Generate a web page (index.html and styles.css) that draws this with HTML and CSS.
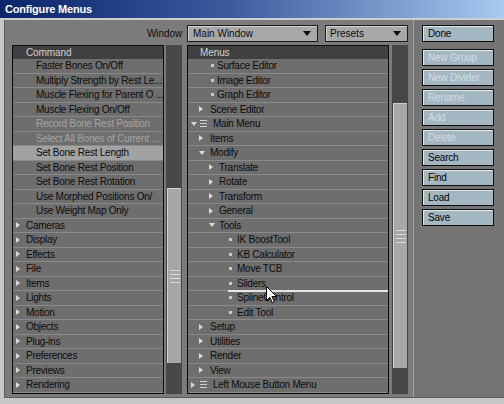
FILE: index.html
```html
<!DOCTYPE html>
<html>
<head>
<meta charset="utf-8">
<link rel="stylesheet" href="styles.css">
</head>
<body>
<div class="win">
  <div class="titlebar">Configure Menus</div>
  <div class="body">
    <div class="main">
      <div class="toprow">
        <div class="lblcell">Window</div>
        <div class="ddcell">
          <div class="dd dd-main"><span>Main Window</span><i class="arrow"></i></div>
          <div class="dd dd-presets"><span>Presets</span><i class="arrow"></i></div>
        </div>
      </div>
      <div class="lists">
        <div class="listbox lb-cmd">
          <div class="lhead">Command</div>
          <div class="row cmd">Faster Bones On/Off</div>
          <div class="row cmd">Multiply Strength by Rest Le...</div>
          <div class="row cmd">Muscle Flexing for Parent O ...</div>
          <div class="row cmd">Muscle Flexing On/Off</div>
          <div class="row cmd dis">Record Bone Rest Position</div>
          <div class="row cmd dis">Select All Bones of Current ...</div>
          <div class="row cmd sel">Set Bone Rest Length</div>
          <div class="row cmd">Set Bone Rest Position</div>
          <div class="row cmd">Set Bone Rest Rotation</div>
          <div class="row cmd">Use Morphed Positions On/</div>
          <div class="row cmd">Use Weight Map Only</div>
          <div class="row grp"><i class="tr"></i><span>Cameras</span></div>
          <div class="row grp"><i class="tr"></i><span>Display</span></div>
          <div class="row grp"><i class="tr"></i><span>Effects</span></div>
          <div class="row grp"><i class="tr"></i><span>File</span></div>
          <div class="row grp"><i class="tr"></i><span>Items</span></div>
          <div class="row grp"><i class="tr"></i><span>Lights</span></div>
          <div class="row grp"><i class="tr"></i><span>Motion</span></div>
          <div class="row grp"><i class="tr"></i><span>Objects</span></div>
          <div class="row grp"><i class="tr"></i><span>Plug-ins</span></div>
          <div class="row grp"><i class="tr"></i><span>Preferences</span></div>
          <div class="row grp"><i class="tr"></i><span>Previews</span></div>
          <div class="row grp"><i class="tr"></i><span>Rendering</span></div>
        </div>
        <div class="sbar sb-cmd"><div class="thumb"><div class="grip"></div></div></div>
        <div class="listbox lb-menu">
          <div class="lhead">Menus</div>
          <div class="row m-b2"><i class="bul"></i><span>Surface Editor</span></div>
          <div class="row m-b2"><i class="bul"></i><span>Image Editor</span></div>
          <div class="row m-b2"><i class="bul"></i><span>Graph Editor</span></div>
          <div class="row m-t1"><i class="tr"></i><span>Scene Editor</span></div>
          <div class="row m-t0"><i class="td"></i><i class="micon"></i><span>Main Menu</span></div>
          <div class="row m-t1"><i class="tr"></i><span>Items</span></div>
          <div class="row m-t1"><i class="td"></i><span>Modify</span></div>
          <div class="row m-t2"><i class="tr"></i><span>Translate</span></div>
          <div class="row m-t2"><i class="tr"></i><span>Rotate</span></div>
          <div class="row m-t2"><i class="tr"></i><span>Transform</span></div>
          <div class="row m-t2"><i class="tr"></i><span>General</span></div>
          <div class="row m-t2"><i class="td"></i><span>Tools</span></div>
          <div class="row m-b3"><i class="bul"></i><span>IK BoostTool</span></div>
          <div class="row m-b3"><i class="bul"></i><span>KB Calculator</span></div>
          <div class="row m-b3"><i class="bul"></i><span>Move TCB</span></div>
          <div class="row m-b3"><i class="bul"></i><span>Sliders</span></div>
          <div class="row m-b3"><i class="bul"></i><span>SplineControl</span></div>
          <div class="row m-b3"><i class="bul"></i><span>Edit Tool</span></div>
          <div class="row m-t1"><i class="tr"></i><span>Setup</span></div>
          <div class="row m-t1"><i class="tr"></i><span>Utilities</span></div>
          <div class="row m-t1"><i class="tr"></i><span>Render</span></div>
          <div class="row m-t1"><i class="tr"></i><span>View</span></div>
          <div class="row m-t0"><i class="tr"></i><i class="micon"></i><span>Left Mouse Button Menu</span></div>
          <div class="dropline"></div>
        </div>
        <div class="sbar sb-menu"><div class="thumb"><div class="grip"></div></div></div>
      </div>
    </div>
    <div class="side">
      <div class="btn done">Done</div>
      <div class="btn off">New Group</div>
      <div class="btn off">New Divider</div>
      <div class="btn off">Rename</div>
      <div class="btn off">Add</div>
      <div class="btn off">Delete</div>
      <div class="btn">Search</div>
      <div class="btn">Find</div>
      <div class="btn">Load</div>
      <div class="btn">Save</div>
    </div>
  </div>
  <svg class="cursor" width="12" height="18" viewBox="0 0 12 18">
    <path d="M0.5 0.5 L0.5 14.5 L3.8 11.3 L6.3 16.8 L8.4 15.9 L5.9 10.5 L10.5 10.5 Z" fill="#ffffff" stroke="#000000" stroke-width="1"/>
  </svg>
</div>
</body>
</html>
```

FILE: styles.css
```css
html, body {
  margin: 0;
  padding: 0;
  background: #7b7b7b;
  font-family: "Liberation Sans", Arial, sans-serif;
}

.win {
  width: 504px;
  height: 404px;
  position: relative;
  overflow: hidden;
  background: #c6c6c6;
  display: flex;
  flex-direction: column;
}

.titlebar {
  flex: none;
  height: 18px;
  line-height: 18px;
  padding-left: 5px;
  background: linear-gradient(90deg, #0a246a 0%, #3a5a9c 45%, #a6caf0 100%);
  color: #ffffff;
  font-weight: bold;
  font-size: 11px;
  letter-spacing: -0.2px;
  border-bottom: 2px solid #cfcfcf;
}

.body {
  flex: none;
  display: flex;
  margin-left: 4px;
  height: 378px;
  box-sizing: border-box;
  border-left: 1px solid #5a5a5a;
  border-bottom: 1px solid #5a5a5a;
  background: #7b7b7b;
}

.main {
  width: 408px;
  flex: none;
  box-sizing: border-box;
  padding-left: 7px;
}

.toprow {
  height: 25px;
  box-sizing: border-box;
  padding-top: 5px;
  display: flex;
  align-items: flex-start;
}

.lblcell {
  width: 170px;
  height: 17px;
  line-height: 17px;
  text-align: right;
  font-size: 10px;
  color: #0c0c0c;
  letter-spacing: -0.1px;
}

.ddcell {
  display: flex;
  margin-left: 5px;
}

.dd {
  height: 17px;
  box-sizing: border-box;
  border: 1px solid #1a1a1a;
  background: #a8a8a8;
  box-shadow: inset 1px 1px 0 #d2d2d2;
  display: flex;
  align-items: center;
  justify-content: space-between;
  padding: 0 6px 0 5px;
  font-size: 10px;
  color: #0c0c0c;
}

.dd-main {
  width: 131px;
  margin-right: 7px;
}

.dd-presets {
  width: 83px;
  padding-left: 4px;
}

.arrow {
  width: 0;
  height: 0;
  border-top: 5px solid #0c0c0c;
  border-left: 4px solid transparent;
  border-right: 4px solid transparent;
}

.lists {
  display: flex;
  height: 349px;
}

.listbox {
  position: relative;
  height: 349px;
  box-sizing: border-box;
  border: 1px solid #0c0c0c;
  background: #6e6e6e;
  overflow: hidden;
}

.lb-cmd { width: 152px; }
.lb-menu { width: 202px; margin-left: 5px; }

.lhead {
  height: 13px;
  line-height: 13px;
  background: #404040;
  color: #d0d0d0;
  font-size: 10px;
  padding-left: 13px;
  letter-spacing: -0.1px;
}

.lb-menu .lhead { padding-left: 12px; }

.row {
  height: 14.5px;
  box-sizing: border-box;
  border-bottom: 1px solid #8a8a8a;
  background: #6e6e6e;
  display: flex;
  align-items: center;
  font-size: 10px;
  letter-spacing: -0.25px;
  white-space: nowrap;
  overflow: hidden;
  color: #0c0c0c;
}

.row i { flex: none; }

.cmd { padding-left: 23px; }
.dis { color: #a4a4a4; }
.sel { background: #a2a2a2; }

.grp { padding-left: 3px; }
.grp .tr { margin-right: 6px; }

.tr {
  width: 0;
  height: 0;
  border-left: 4px solid #dadada;
  border-top: 3px solid transparent;
  border-bottom: 3px solid transparent;
}

.td {
  width: 0;
  height: 0;
  border-top: 4px solid #dadada;
  border-left: 3px solid transparent;
  border-right: 3px solid transparent;
}

.bul {
  width: 3px;
  height: 3px;
  background: #c8c8c8;
}

.micon {
  width: 7px;
  height: 7px;
  background: repeating-linear-gradient(#d0d0d0 0 1px, transparent 1px 3px);
}

.m-b2 { padding-left: 23px; }
.m-b2 .bul { margin-right: 3px; }

.m-t1 { padding-left: 11px; }
.m-t1 .tr { margin-right: 7px; }
.m-t1 .td { margin-right: 5px; }

.m-t2 { padding-left: 21px; }
.m-t2 .tr { margin-right: 6px; }
.m-t2 .td { margin-right: 4px; }

.m-b3 { padding-left: 41px; }
.m-b3 .bul { margin-right: 5px; }

.m-t0 { padding-left: 3px; }
.m-t0 .td { margin-right: 3px; }
.m-t0 .tr { margin-right: 5px; }
.m-t0 .micon { margin-right: 6px; }

.dropline {
  position: absolute;
  left: 40px;
  top: 244px;
  width: 162px;
  height: 2px;
  background: #e6e6e6;
}

.sbar {
  width: 16px;
  height: 349px;
  box-sizing: border-box;
  background: #474747;
  display: flex;
  flex-direction: column;
  align-items: stretch;
}

.sb-cmd { margin-left: 2px; }
.sb-menu { margin-left: 3px; }

.thumb {
  box-sizing: border-box;
  margin: 0 1px;
  background: #a7a7a7;
  border-left: 1px solid #d0d0d0;
  border-top: 1px solid #d0d0d0;
  display: flex;
  align-items: center;
  justify-content: center;
}

.sb-cmd .thumb { margin-top: 143px; height: 175px; }
.sb-menu .thumb { margin-top: 58px; height: 265px; }

.grip {
  width: 10px;
  height: 13px;
  background: repeating-linear-gradient(#dcdcdc 0 1px, transparent 1px 4px);
}

.side {
  flex: 1;
  box-sizing: border-box;
  border-left: 1px solid #a2a2a2;
  background: #747474;
  padding: 5px 0 0 8px;
}

.btn {
  width: 72px;
  height: 17px;
  box-sizing: border-box;
  border: 1px solid #0c0c0c;
  background: #a4b6c2;
  box-shadow: inset 1px 1px 0 #dde7ee;
  font-size: 10px;
  line-height: 15px;
  padding-left: 5px;
  letter-spacing: -0.2px;
  color: #050505;
  margin-bottom: 3px;
}

.btn.done { margin-bottom: 7px; }
.btn.off { color: #d3dee6; }

.cursor {
  position: absolute;
  left: 266px;
  top: 286px;
}
```
